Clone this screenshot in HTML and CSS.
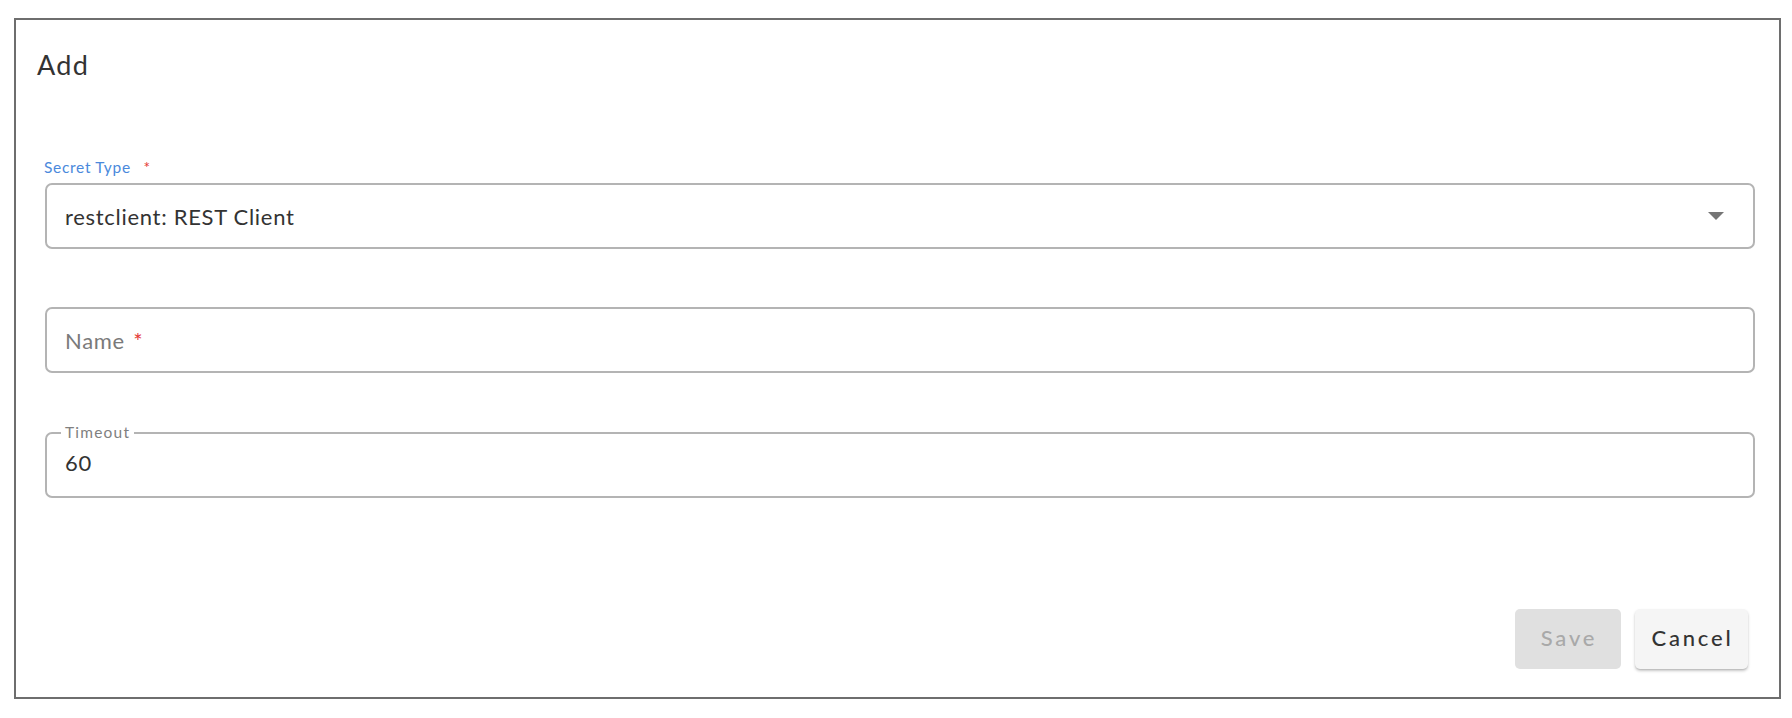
FILE: index.html
```html
<!DOCTYPE html>
<html lang="en">
<head>
<meta charset="utf-8">
<title>Add</title>
<link rel="stylesheet" href="styles.css">
</head>
<body>
<div class="dialog">
  <h1 class="title">Add</h1>
  <div class="fields">
    <div class="field">
      <div class="field-label">Secret Type <span class="req">*</span></div>
      <div class="select">
        <span class="value">restclient: REST Client</span>
        <svg class="arrow" width="16" height="8" viewBox="0 0 16 8"><path d="M0 0 L16 0 L8 8 Z" fill="#757575"/></svg>
      </div>
    </div>
    <div class="input name-input">
      <span class="placeholder">Name <span class="req">*</span></span>
    </div>
    <div class="input outlined">
      <span class="float-label">Timeout</span>
      <span class="value">60</span>
    </div>
  </div>
  <div class="actions">
    <button class="btn btn-disabled" disabled>Save</button>
    <button class="btn btn-cancel">Cancel</button>
  </div>
</div>
</body>
</html>
```

FILE: styles.css
```css
html, body {
  margin: 0;
  padding: 0;
  background: #ffffff;
}
body {
  font-family: Lato, "Noto Sans", sans-serif;
  color: #333333;
}
.dialog {
  box-sizing: border-box;
  margin: 18px 0 0 14px;
  width: 1767px;
  height: 681px;
  border: 2px solid #6e6e6e;
  padding: 29px 24px 28px 29px;
  display: flex;
  flex-direction: column;
}
.title {
  margin: 0 0 0 -8px;
  font-size: 27px;
  line-height: 31px;
  font-weight: 400;
  letter-spacing: 1.3px;
  color: #333333;
}
.fields {
  display: flex;
  flex-direction: column;
  margin-top: 78px;
}
.field-label {
  font-size: 15.5px;
  line-height: 18px;
  letter-spacing: 0.7px;
  color: #4a89dc;
  margin-bottom: 7px;
  margin-left: -1px;
}
.field-label .req {
  color: #e53935;
  margin-left: 8px;
}
.req {
  color: #e53935;
}
.select, .input {
  box-sizing: border-box;
  height: 66px;
  border: 2px solid #b4b4b4;
  border-radius: 7px;
  display: flex;
  align-items: center;
  padding: 0 29px 0 18px;
  font-size: 22px;
  letter-spacing: 0.7px;
  position: relative;
}
.select .value {
  flex: 1;
  color: #333333;
}
.arrow {
  display: block;
}
.name-input {
  margin-top: 58px;
}
.placeholder {
  color: #7a7a7a;
}
.placeholder .req {
  margin-left: 2px;
}
.outlined {
  margin-top: 59px;
  align-items: flex-start;
  padding-top: 16px;
}
.outlined .value {
  color: #333333;
  line-height: 26px;
}
.float-label {
  position: absolute;
  top: -11px;
  left: 14px;
  padding: 0 4px;
  background: #ffffff;
  font-size: 15.5px;
  line-height: 18px;
  letter-spacing: 1.2px;
  color: #808080;
}
.actions {
  margin-top: auto;
  display: flex;
  justify-content: flex-end;
  gap: 14px;
  padding-right: 7px;
}
.btn {
  font-family: Lato, "Noto Sans", sans-serif;
  font-size: 22px;
  letter-spacing: 2.8px;
  height: 60px;
  border: none;
  border-radius: 5px;
  padding: 0 0 3px 2px;
  font-weight: 500;
}
.btn-disabled {
  width: 106px;
  background: #e0e0e0;
  color: #a9a9a9;
}
.btn-cancel {
  width: 113px;
  background: #f5f5f5;
  color: #333333;
  box-shadow: 0 2px 3px rgba(0,0,0,0.22), 0 1px 1px rgba(0,0,0,0.08);
}
```
